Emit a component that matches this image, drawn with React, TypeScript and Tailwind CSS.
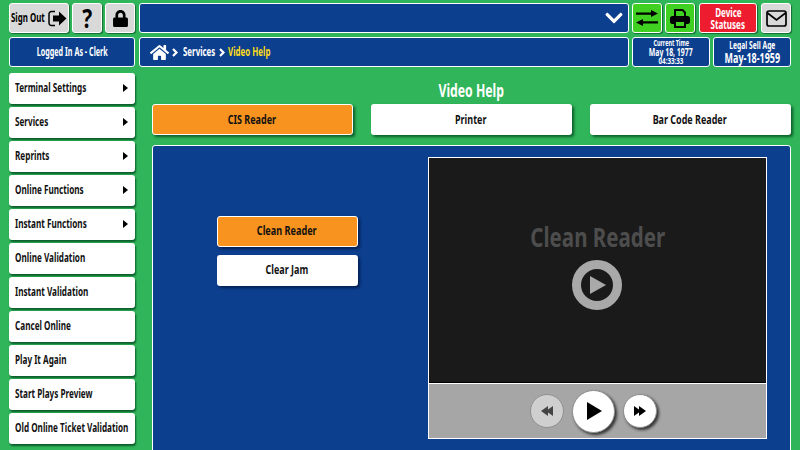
import { FaChevronDown, FaHome, FaLock } from 'react-icons/fa';

const base = 'font-["Noto_Sans","Open_Sans",sans-serif] font-bold whitespace-nowrap';

const menuItems = [
  { label: 'Terminal Settings', arrow: true },
  { label: 'Services', arrow: true },
  { label: 'Reprints', arrow: true },
  { label: 'Online Functions', arrow: true },
  { label: 'Instant Functions', arrow: true },
  { label: 'Online Validation' },
  { label: 'Instant Validation' },
  { label: 'Cancel Online' },
  { label: 'Play It Again' },
  { label: 'Start Plays Preview' },
  { label: 'Old Online Ticket Validation' },
];

const tabs = ['CIS Reader', 'Printer', 'Bar Code Reader'];

const SignOutIcon = () => (
  <svg width="19" height="17" viewBox="0 0 19 17" fill="none" className="shrink-0">
    <path d="M7 1.5H3.5a2.5 2.5 0 0 0-2.5 2.5v9a2.5 2.5 0 0 0 2.5 2.5H7" stroke="#000" strokeWidth="1.5" />
    <path d="M5 5.5h6V1.5l7.500 7L11 15.500V11.500H5z" fill="#000" />
  </svg>
);

const SwapIcon = () => (
  <svg width="22" height="16" viewBox="0 0 22 16" fill="#000">
    <path d="M0 2.500h15V0l7 3.500-7 3.500V4.800H0z" />
    <path d="M22 11.200H7V9l-7 3.500L7 16v-2.500h15z" />
  </svg>
);

const PrinterIcon = () => (
  <svg width="20" height="19" viewBox="0 0 20 19">
    <path d="M5 8V1h7.500L15 3.500V8" fill="none" stroke="#000" strokeWidth="2" />
    <rect x="0" y="7" width="20" height="8" rx="2.500" fill="#000" />
    <rect x="5" y="12" width="10" height="6" fill="#3fd021" stroke="#000" strokeWidth="2" />
  </svg>
);

const MailIcon = () => (
  <svg width="21" height="17" viewBox="0 0 21 17" fill="none" stroke="#000" strokeWidth="1.7">
    <rect x="1" y="1" width="19" height="15" rx="2" />
    <path d="M1.500 3l9 7 9-7" />
  </svg>
);

const Crumb = () => (
  <svg width="6" height="9" viewBox="0 0 6 9" fill="none" stroke="#fff" strokeWidth="2.200" className="shrink-0">
    <path d="M1 1l3.500 3.500L1 8" />
  </svg>
);

const TopButton = ({ className, children }: { className: string; children: React.ReactNode }) => (
  <div className={`h-[30px] flex items-center justify-center rounded-[3px] border border-white shadow-[1px_1px_1px_rgba(0,60,20,0.6)] ${className}`}>
    {children}
  </div>
);

const Triangle = ({ dir, color }: { dir: 'left' | 'right'; color: string }) => (
  <svg width="7" height="10" viewBox="0 0 7 10" fill={color} className="-mx-[1px]">
    {dir === 'right' ? <path d="M0 0l7 5-7 5z" /> : <path d="M7 0L0 5l7 5z" />}
  </svg>
);

export default function App() {
  return (
    <div className={`w-[800px] h-[450px] overflow-hidden bg-[#31b55a] pt-[3px] pl-[9px] pr-[9px] flex flex-col ${base}`}>
      {/* top bar */}
      <div className="flex gap-[3px]">
        <TopButton className="w-[60px] bg-[#d9d9d9] text-[12px] text-black !justify-start pl-[1px]">
          <span className="w-[37px] inline-block scale-x-[0.66] origin-left">Sign Out</span>
          <SignOutIcon />
        </TopButton>
        <TopButton className="w-[30px] bg-[#d9d9d9] text-[26px] text-black">
          <span className="inline-block scale-x-[0.8]">?</span>
        </TopButton>
        <TopButton className="w-[30px] bg-[#d9d9d9]">
          <FaLock size={17} color="#000" />
        </TopButton>
        <div className="ml-[1px] w-[490px] h-[30px] bg-[#0d3f8f] border border-white rounded-[3px] flex items-center justify-end pr-[4px]">
          <FaChevronDown size={20} color="#fff" />
        </div>
        <TopButton className="w-[30px] bg-[#3fd021]">
          <SwapIcon />
        </TopButton>
        <TopButton className="w-[30px] bg-[#3fd021]">
          <PrinterIcon />
        </TopButton>
        <TopButton className="ml-[1px] w-[58px] bg-[#ed1c2e] text-white text-[13px] leading-[12px] !flex-col">
          <span className="inline-block scale-x-[0.62]">Device</span>
          <span className="inline-block scale-x-[0.62]">Statuses</span>
        </TopButton>
        <TopButton className="ml-[1px] w-[30px] bg-[#d9d9d9]">
          <MailIcon />
        </TopButton>
      </div>

      {/* status row */}
      <div className="flex gap-[3px] mt-[4px] text-white">
        <div className="w-[126px] h-[30px] bg-[#0d3f8f] border border-white rounded-[3px] flex items-center justify-center text-[12px]">
          <span className="inline-block scale-x-[0.6]">Logged In As - Clerk</span>
        </div>
        <div className="ml-[1px] w-[490px] h-[30px] bg-[#0d3f8f] border border-white rounded-[3px] flex items-center pl-[10px] text-[12px]">
          <FaHome size={19} color="#fff" className="shrink-0" />
          <span className="ml-[3px]">
            <Crumb />
          </span>
          <span className="ml-[5px] w-[36px] inline-block scale-x-[0.66] origin-left">Services</span>
          <Crumb />
          <span className="ml-[3px] inline-block scale-x-[0.66] origin-left text-[#ffde17]">Video Help</span>
        </div>
        <div className="w-[78px] h-[30px] bg-[#0d3f8f] border border-white rounded-[3px] flex flex-col items-center justify-center">
          <span className="text-[8px] leading-[8px] inline-block scale-x-[0.68]">Current Time</span>
          <span className="text-[10px] leading-[10px] inline-block scale-x-[0.69]">May 18, 1977</span>
          <span className="text-[8px] leading-[8px] inline-block scale-x-[0.78]">04:33:33</span>
        </div>
        <div className="w-[78px] h-[30px] bg-[#0d3f8f] border border-white rounded-[3px] flex flex-col items-center justify-center">
          <span className="text-[10px] leading-[12px] inline-block scale-x-[0.67]">Legal Sell Age</span>
          <span className="text-[14px] leading-[14px] inline-block scale-x-[0.64]">May-18-1959</span>
        </div>
      </div>

      <div className="flex gap-[17px] mt-[6px]">
        {/* side menu */}
        <div className="w-[126px] shrink-0 flex flex-col gap-[3px]">
          {menuItems.map((item) => (
            <div
              key={item.label}
              className="h-[31px] shrink-0 bg-white rounded-[3px] flex items-center justify-between pl-[6px] pr-[7px] pb-[1px] text-[12px] text-[#111] shadow-[1px_2px_2px_#0a5c2a]"
            >
              <span className="inline-block scale-x-[0.68] origin-left">{item.label}</span>
              {item.arrow && (
                <svg width="5" height="8" viewBox="0 0 5 8" fill="#000" className="shrink-0">
                  <path d="M0 0l5 4-5 4z" />
                </svg>
              )}
            </div>
          ))}
        </div>

        {/* content */}
        <div className="w-[639px] flex flex-col">
          <div className="h-[31px] flex items-end justify-center pb-[4px] text-white text-[18px] leading-[20px]">
            <span className="inline-block scale-x-[0.68]">Video Help</span>
          </div>
          <div className="flex gap-[18px]">
            {tabs.map((tab, i) => (
              <div
                key={tab}
                className={`w-[201px] h-[31px] rounded-[3px] flex items-center justify-center pr-[1px] text-[13px] text-[#111] shadow-[2px_2px_3px_#0a5c2a] ${
                  i === 0 ? 'bg-[#f7931e] border border-white' : 'bg-white'
                }`}
              >
                <span className="inline-block scale-x-[0.69]">{tab}</span>
              </div>
            ))}
          </div>

          <div className="mt-[10px] h-[320px] bg-[#0d3f8f] border border-white rounded-[3px] flex pt-[11px]">
            <div className="w-[275px] shrink-0 pl-[64px] pt-[59px] flex flex-col gap-[8px]">
              <div className="w-[141px] h-[31px] bg-[#f7931e] border border-white rounded-[3px] flex items-center justify-center pb-[1px] pr-[1px] text-[13px] text-[#111] shadow-[2px_2px_3px_#04204f]">
                <span className="inline-block scale-x-[0.7]">Clean Reader</span>
              </div>
              <div className="w-[141px] h-[31px] bg-white rounded-[3px] flex items-center justify-center pb-[1px] pr-[1px] text-[13px] text-[#111] shadow-[2px_2px_3px_#04204f]">
                <span className="inline-block scale-x-[0.69]">Clear Jam</span>
              </div>
            </div>

            {/* video player */}
            <div className="w-[339px] h-[282px] border border-white flex flex-col shrink-0">
              <div className="h-[225px] bg-[#1a1a1a] border-b border-black flex flex-col items-center pt-[64px]">
                <span className="text-[#4d4d4d] text-[27px] leading-[30px] inline-block scale-x-[0.76]">Clean Reader</span>
                <div className="mt-[8px] mr-[1px] w-[50px] h-[50px] rounded-full border-[9px] border-[#a9a9a9] flex items-center justify-center pl-[2px]">
                  <svg width="16" height="18" viewBox="0 0 16 18" fill="#a9a9a9">
                    <path d="M0 0l16 9-16 9z" />
                  </svg>
                </div>
              </div>
              <div className="flex-1 bg-[#a6a6a6] border-t border-white flex items-center justify-center gap-[8px] pr-[8px]">
                <div className="w-[34px] h-[34px] rounded-full bg-[#cfcfcf] border border-[#8f8f8f] flex items-center justify-center">
                  <Triangle dir="left" color="#444" />
                  <Triangle dir="left" color="#444" />
                </div>
                <div className="w-[43px] h-[43px] rounded-full bg-white border border-[#8f8f8f] flex items-center justify-center shadow-[2px_2px_3px_#333] pl-[1px]">
                  <svg width="15" height="18" viewBox="0 0 15 18" fill="#000">
                    <path d="M0 0l15 9-15 9z" />
                  </svg>
                </div>
                <div className="w-[34px] h-[34px] rounded-full bg-white border border-[#8f8f8f] flex items-center justify-center shadow-[2px_2px_3px_#333]">
                  <Triangle dir="right" color="#000" />
                  <Triangle dir="right" color="#000" />
                </div>
              </div>
            </div>
          </div>
        </div>
      </div>
    </div>
  );
}
